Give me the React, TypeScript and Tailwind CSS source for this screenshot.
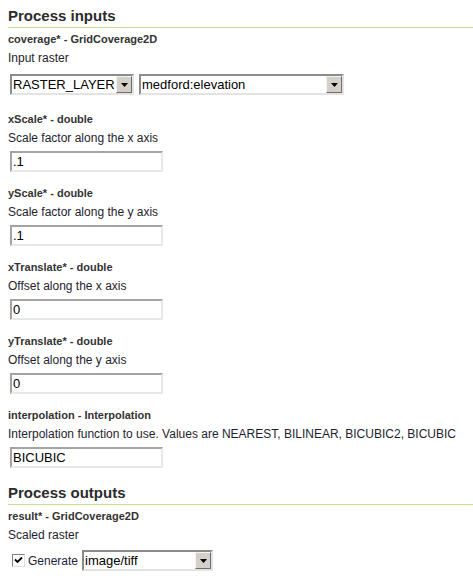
import type { ReactNode } from "react";

const font = "font-['Liberation_Sans',Arial,sans-serif]";

function Heading({ children, className = "" }: { children: ReactNode; className?: string }) {
  return (
    <h2
      className={`border-b border-[#c4e391] pb-[2px] text-[15px] font-bold leading-[18px] text-[#2b2b2b] ${className}`}
    >
      {children}
    </h2>
  );
}

function Select({ value, width }: { value: string; width: string }) {
  return (
    <div
      className={`flex h-[21px] items-stretch border-2 border-t-[#8c8c8c] border-l-[#8c8c8c] border-b-[#e3e3e3] border-r-[#e3e3e3] bg-white ${width}`}
    >
      <span className="flex-1 overflow-hidden whitespace-nowrap pl-[1px] text-[13px] leading-[17px] text-black">
        {value}
      </span>
      <span className="flex w-[16px] items-center justify-center border border-t-[#f4f4f4] border-l-[#f4f4f4] border-b-[#6e6e6e] border-r-[#6e6e6e] bg-[#d4d0c8]">
        <svg width="7" height="4" viewBox="0 0 7 4">
          <path d="M0 0h7L3.5 4z" fill="#000" />
        </svg>
      </span>
    </div>
  );
}

function TextInput({ value }: { value: string }) {
  return (
    <div className="ml-[2px] h-[21px] w-[153px] border-2 border-t-[#a3a3a3] border-l-[#a3a3a3] border-b-[#e8e8e8] border-r-[#e8e8e8] bg-white pl-[1px] text-[13px] leading-[17px] text-black">
      {value}
    </div>
  );
}

function Param({
  name,
  type,
  desc,
  children,
  className = "",
  gap = "mt-[6px]",
}: {
  name: string;
  type: string;
  desc: string;
  children: ReactNode;
  className?: string;
  gap?: string;
}) {
  return (
    <div className={className}>
      <div className="text-[11px] font-bold leading-[13px] text-[#333]">
        {name} - {type}
      </div>
      <div className="mt-[5px] text-[12px] leading-[14px] text-[#1e1e2e]">{desc}</div>
      <div className={gap}>{children}</div>
    </div>
  );
}

export default function App() {
  return (
    <div className={`min-h-[585px] bg-white pl-2 pt-[7px] ${font}`}>
      <Heading>Process inputs</Heading>

      <Param
        name="coverage*"
        type="GridCoverage2D"
        desc="Input raster"
        className="mt-[5px]"
        gap="mt-[9px]"
      >
        <div className="ml-[2px] flex gap-[5px]">
          <Select value="RASTER_LAYER" width="w-[124px]" />
          <Select value="medford:elevation" width="w-[205px]" />
        </div>
      </Param>

      <Param
        name="xScale*"
        type="double"
        desc="Scale factor along the x axis"
        className="mt-[18px]"
      >
        <TextInput value=".1" />
      </Param>

      <Param
        name="yScale*"
        type="double"
        desc="Scale factor along the y axis"
        className="mt-[15px]"
      >
        <TextInput value=".1" />
      </Param>

      <Param
        name="xTranslate*"
        type="double"
        desc="Offset along the x axis"
        className="mt-[15px]"
      >
        <TextInput value="0" />
      </Param>

      <Param
        name="yTranslate*"
        type="double"
        desc="Offset along the y axis"
        className="mt-[15px]"
      >
        <TextInput value="0" />
      </Param>

      <Param
        name="interpolation"
        type="Interpolation"
        desc="Interpolation function to use. Values are NEAREST, BILINEAR, BICUBIC2, BICUBIC"
        className="mt-[15px]"
      >
        <TextInput value="BICUBIC" />
      </Param>

      <Heading className="mt-[16px]">Process outputs</Heading>

      <Param
        name="result*"
        type="GridCoverage2D"
        desc="Scaled raster"
        className="mt-[5px]"
        gap="mt-[8px]"
      >
        <div className="flex items-center">
          <span className="ml-[4px] flex h-[13px] w-[13px] items-center justify-center border border-t-[#808080] border-l-[#808080] border-b-[#e0e0e0] border-r-[#e0e0e0] bg-white">
            <svg width="9" height="9" viewBox="0 0 9 9">
              <path d="M1 3.5l2.5 2.5L8 1.5" stroke="#000" strokeWidth="1.8" fill="none" />
            </svg>
          </span>
          <span className="ml-[3px] text-[12px] leading-[14px] text-[#1e1e3e]">Generate</span>
          <span className="ml-[4px]">
            <Select value="image/tiff" width="w-[131px]" />
          </span>
        </div>
      </Param>
    </div>
  );
}
